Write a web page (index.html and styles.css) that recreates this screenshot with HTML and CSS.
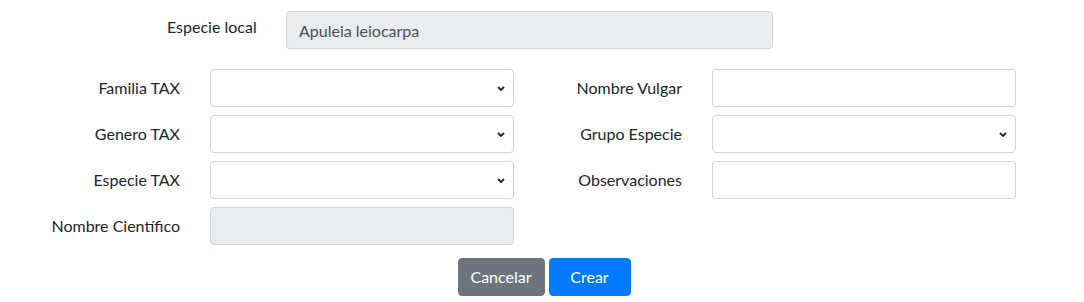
FILE: index.html
```html
<!DOCTYPE html>
<html lang="es">
<head>
<meta charset="utf-8">
<title>Especie</title>
<link rel="stylesheet" href="styles.css">
</head>
<body>
<form class="form">
  <div class="top-row">
    <label class="top-label" for="local">Especie local</label>
    <input class="control control-wide" id="local" type="text" value="Apuleia leiocarpa" disabled>
  </div>
  <div class="fields">
    <label class="field-label" for="familia">Familia TAX</label>
    <select class="control select" id="familia"><option></option></select>
    <label class="field-label" for="vulgar">Nombre Vulgar</label>
    <input class="control" id="vulgar" type="text">

    <label class="field-label" for="genero">Genero TAX</label>
    <select class="control select" id="genero"><option></option></select>
    <label class="field-label" for="grupo">Grupo Especie</label>
    <select class="control select" id="grupo"><option></option></select>

    <label class="field-label" for="especie">Especie TAX</label>
    <select class="control select" id="especie"><option></option></select>
    <label class="field-label" for="obs">Observaciones</label>
    <input class="control" id="obs" type="text">

    <label class="field-label" for="cientifico">Nombre Científico</label>
    <input class="control" id="cientifico" type="text" disabled>
  </div>
  <div class="actions">
    <button type="button" class="btn btn-secondary">Cancelar</button>
    <button type="submit" class="btn btn-primary">Crear</button>
  </div>
</form>
</body>
</html>
```
FILE: styles.css
```css
* {
  box-sizing: border-box;
}

html, body {
  margin: 0;
  padding: 0;
  background: #fff;
}

body {
  font-family: Lato, "Noto Sans", Roboto, sans-serif;
  font-size: 16px;
  line-height: 1.5;
  color: #212529;
}

.form {
  padding-top: 11px;
}

.top-row {
  display: flex;
  align-items: flex-start;
  padding-left: 167px;
}

.top-label {
  width: 119px;
  padding-top: 4px;
}

.control {
  display: block;
  height: 38px;
  padding: 6px 12px;
  font-family: inherit;
  font-size: 16px;
  line-height: 1.5;
  color: #495057;
  background-color: #fff;
  border: 1px solid #ced4da;
  border-radius: 4px;
  width: 100%;
  margin: 0;
}

.control:disabled {
  background-color: #e9ecef;
  opacity: 1;
}

.control-wide {
  width: 487px;
}

.select {
  appearance: none;
  -webkit-appearance: none;
  padding-right: 28px;
  background-image: url("data:image/svg+xml,%3Csvg xmlns='http://www.w3.org/2000/svg' width='8' height='5' viewBox='0 0 8 5'%3E%3Cpath d='M1 1l3 3 3-3' fill='none' stroke='%23222' stroke-width='1.8'/%3E%3C/svg%3E");
  background-repeat: no-repeat;
  background-position: right 8px center;
  background-size: 8px 5px;
}

.fields {
  display: grid;
  grid-template-columns: 180px 304px 138px 304px;
  grid-auto-rows: 38px;
  column-gap: 30px;
  row-gap: 8px;
  margin-top: 20px;
}

.field-label {
  align-self: center;
  text-align: right;
  white-space: nowrap;
}

.actions {
  display: flex;
  justify-content: center;
  gap: 4px;
  margin-top: 13px;
  padding-left: 4px;
}

.btn {
  height: 38px;
  font-family: inherit;
  font-size: 16px;
  line-height: 1.5;
  color: #fff;
  border: 1px solid transparent;
  border-radius: 4px;
  padding: 6px 0;
  text-align: center;
  cursor: pointer;
}

.btn-secondary {
  background-color: #6c757d;
  border-color: #6c757d;
  width: 87px;
}

.btn-primary {
  background-color: #007bff;
  border-color: #007bff;
  width: 82px;
}
```
